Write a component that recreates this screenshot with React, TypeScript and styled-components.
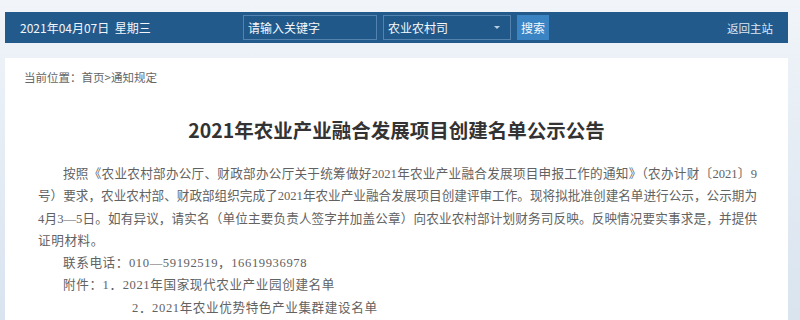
import React from 'react';
import styled, { createGlobalStyle } from 'styled-components';

const GlobalStyle = createGlobalStyle`
  html, body {
    margin: 0;
    padding: 0;
  }
  body {
    width: 800px;
    height: 320px;
    overflow: hidden;
    background: linear-gradient(180deg, #f1f5f9 0%, #e6edf5 40%, #d9e4ef 100%);
    font-family: "Noto Sans CJK SC", "Noto Sans", sans-serif;
  }
`;

const bodyLines = [
  {
    text: '按照《农业农村部办公厅、财政部办公厅关于统筹做好2021年农业产业融合发展项目申报工作的通知》（农办计财〔2021〕9',
    indent: 25,
    justify: true,
  },
  {
    text: '号）要求，农业农村部、财政部组织完成了2021年农业产业融合发展项目创建评审工作。现将拟批准创建名单进行公示，公示期为',
    indent: 0,
    justify: true,
  },
  {
    text: '4月3—5日。如有异议，请实名（单位主要负责人签字并加盖公章）向农业农村部计划财务司反映。反映情况要实事求是，并提供',
    indent: 0,
    justify: true,
  },
  { text: '证明材料。', indent: 0, justify: false },
  { text: '联系电话：010—59192519，16619936978', indent: 25, justify: false },
  { text: '附件：1．2021年国家现代农业产业园创建名单', indent: 25, justify: false },
  { text: '2．2021年农业优势特色产业集群建设名单', indent: 94, justify: false },
];

const App: React.FC = () => {
  return (
    <Page>
      <GlobalStyle />
      <TopBar>
        <DateText>2021年04月07日&nbsp;&nbsp;星期三</DateText>
        <SearchInput placeholder="请输入关键字" />
        <DeptSelect>
          <span>农业农村司</span>
          <Caret />
        </DeptSelect>
        <SearchButton>搜索</SearchButton>
        <HomeLink>返回主站</HomeLink>
      </TopBar>
      <Panel>
        <Breadcrumb>当前位置：首页&gt;通知规定</Breadcrumb>
        <Title>2021年农业产业融合发展项目创建名单公示公告</Title>
        <Article>
          {bodyLines.map((line, i) => (
            <Line key={i} $indent={line.indent} $justify={line.justify}>
              {line.text}
            </Line>
          ))}
        </Article>
      </Panel>
    </Page>
  );
};

const Page: any = styled.div`
  box-sizing: border-box;
  display: flex;
  flex-direction: column;
  height: 320px;
  overflow: hidden;
  padding: 12px 12px 0 5px;
`;

const TopBar: any = styled.div`
  flex: 0 0 31px;
  display: flex;
  align-items: center;
  padding: 0 15px;
  background: #225a8b;
  color: #eef4fa;
`;

const DateText: any = styled.div`
  flex: 0 0 223px;
  font-size: 12px;
  color: #f2f6fb;
`;

const SearchInput: any = styled.input`
  box-sizing: border-box;
  width: 134px;
  height: 25px;
  padding: 0 4px;
  border: 1px solid #5583af;
  background: #21588a;
  font-family: "Noto Sans CJK SC", sans-serif;
  font-size: 12px;
  outline: none;
  &::placeholder {
    color: #f4f8fc;
  }
`;

const DeptSelect: any = styled.div`
  box-sizing: border-box;
  display: flex;
  align-items: center;
  justify-content: space-between;
  width: 128px;
  height: 25px;
  margin-left: 6px;
  padding: 0 10px 0 4px;
  border: 1px solid #5583af;
  background: #21588a;
  font-size: 12px;
  color: #f4f8fc;
`;

const Caret: any = styled.span`
  width: 0;
  height: 0;
  border-left: 3px solid transparent;
  border-right: 3px solid transparent;
  border-top: 3px solid #b9cde0;
`;

const SearchButton: any = styled.div`
  display: flex;
  align-items: center;
  justify-content: center;
  width: 32px;
  height: 25px;
  margin-left: 6px;
  background: #3b84c4;
  font-size: 12px;
  color: #f4f8fc;
`;

const HomeLink: any = styled.div`
  margin-left: auto;
  font-size: 11.5px;
  color: #dce8f4;
`;

const Panel: any = styled.div`
  flex: 1;
  display: flex;
  flex-direction: column;
  margin-top: 15px;
  padding: 10px 0 0 19px;
  background: #ffffff;
`;

const Breadcrumb: any = styled.div`
  font-size: 11.5px;
  line-height: 18px;
  color: #666666;
`;

const Title: any = styled.h1`
  margin: 30px 0 0 -19px;
  font-size: 19.5px;
  line-height: 28px;
  font-weight: 700;
  text-align: center;
  color: #333333;
`;

const Article: any = styled.div`
  width: 719px;
  margin: 19px 0 0 14px;
  font-family: "Liberation Serif", "Noto Sans CJK SC", serif;
  font-size: 12.6px;
  line-height: 22.3px;
  color: #626262;
`;

const Line: any = styled.div<{ $indent: number; $justify: boolean }>`
  padding-left: ${(p) => p.$indent}px;
  white-space: nowrap;
  text-align: ${(p) => (p.$justify ? 'justify' : 'left')};
  text-align-last: ${(p) => (p.$justify ? 'justify' : 'left')};
  letter-spacing: ${(p) => (p.$justify ? '0' : '0.6px')};
`;

export default App;
